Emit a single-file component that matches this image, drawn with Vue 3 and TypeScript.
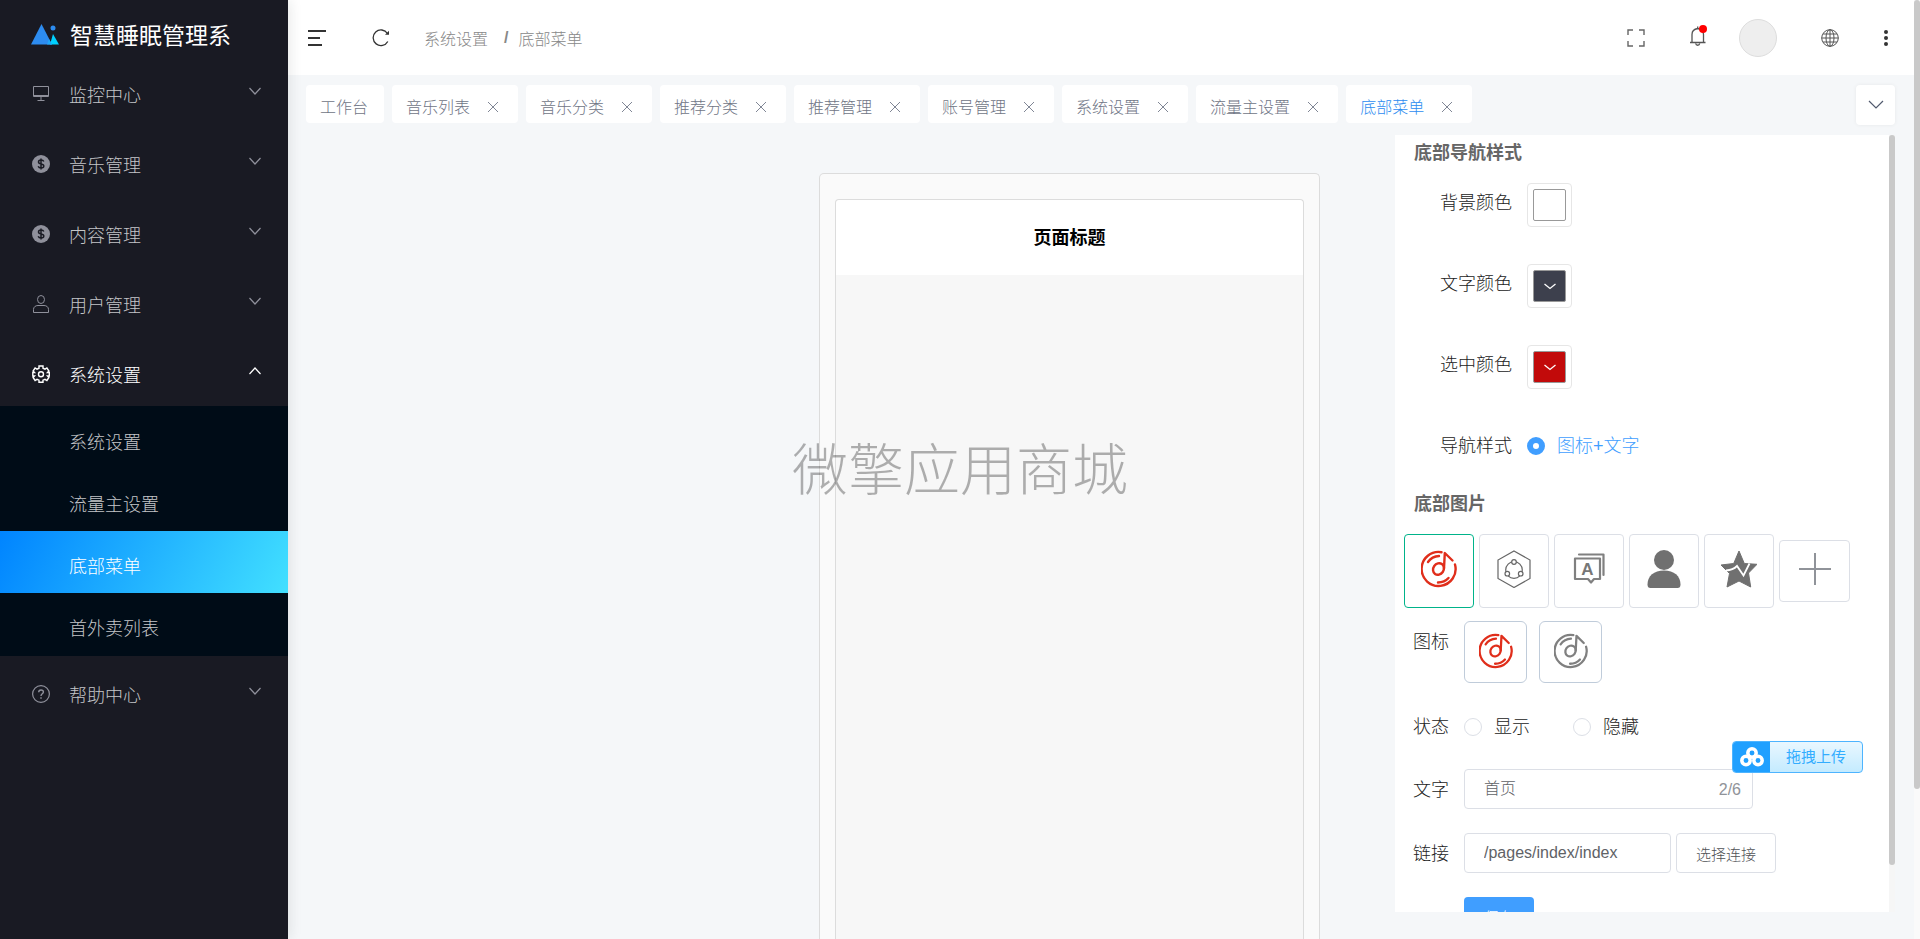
<script setup lang="ts">
import { ref } from 'vue'

interface MenuItem {
  label: string
  icon: 'monitor' | 'coin' | 'user' | 'gear' | 'help'
  children?: string[]
}

const menu: MenuItem[] = [
  { label: '监控中心', icon: 'monitor' },
  { label: '音乐管理', icon: 'coin' },
  { label: '内容管理', icon: 'coin' },
  { label: '用户管理', icon: 'user' },
  { label: '系统设置', icon: 'gear', children: ['系统设置', '流量主设置', '底部菜单', '首外卖列表'] },
  { label: '帮助中心', icon: 'help' },
]

const tabs = ['工作台', '音乐列表', '音乐分类', '推荐分类', '推荐管理', '账号管理', '系统设置', '流量主设置', '底部菜单']
const current = ref('底部菜单')

const colors = [
  { label: '背景颜色', id: 'bg', tone: 'blank' },
  { label: '文字颜色', id: 'text', tone: 'slate' },
  { label: '选中颜色', id: 'active', tone: 'red' },
]

const navStyle = ref('both')
const status = ref('')
const caption = ref('首页')
const link = ref('/pages/index/index')
</script>

<template>
  <div class="app">
    <aside class="sidebar">
      <div class="brand">
        <svg class="brand-logo" viewBox="0 0 28 21" aria-hidden="true">
          <path d="M10.500 0 21 20.500H0Z" fill="#2d8cf0" />
          <path d="M22 10 28 20.500H19Z" fill="#00d1ff" />
          <path d="M18 15l3 5.500h-5z" fill="#1fa8f8" />
          <circle cx="22" cy="4" r="2.500" fill="#2d8cf0" />
        </svg>
        <span>智慧睡眠管理系</span>
      </div>
      <nav>
        <ul class="menu">
          <li v-for="item in menu" :key="item.label">
            <button type="button" class="menu-item" :class="{ open: item.children }">
              <svg class="menu-icon" viewBox="0 0 18 18" fill="none" stroke="currentColor" aria-hidden="true">
                <template v-if="item.icon === 'monitor'">
                  <path d="M1.500 1.500h15v10h-15zM1.500 10.500h15M9 12v3M5.500 15.500h7" />
                </template>
                <template v-else-if="item.icon === 'coin'">
                  <circle cx="9" cy="9" r="9" fill="currentColor" stroke="none" />
                  <path d="M11.800 6.500C11.300 5.300 10.300 5 9 5 7.500 5 6.500 5.700 6.500 6.900c0 2.700 5.300 1.300 5.300 4 0 1.300-1.200 2-2.700 2-1.600 0-2.500-.6-2.900-1.700M9 3.500v11" stroke="#191a23" stroke-width="1.500" />
                </template>
                <template v-else-if="item.icon === 'user'">
                  <ellipse cx="9" cy="4.500" rx="3.500" ry="4" />
                  <path d="M1.500 17.500v-3c0-2.500 2-4 4.500-4h6c2.500 0 4.500 1.500 4.500 4v3z" />
                </template>
                <template v-else-if="item.icon === 'gear'">
                  <path d="M7 1h4v2.200l2 1 1.900-1.200 2 3L15.500 7.500h1.800v3.500h-1.800l1.400 1.500-2 3L13 14.300l-2 .8V17.200H7v-2.100l-2-.8-1.900 1.200-2-3L2.500 11H.8V7.500h1.700L1.100 6l2-3L5 4.200l2-1z" stroke-width="1.400" />
                  <circle cx="9" cy="9.200" r="2.500" stroke-width="1.400" />
                </template>
                <template v-else>
                  <circle cx="9" cy="9" r="8.400" stroke-width="1.200" />
                  <path d="M6.700 7.200C6.700 5.700 7.700 5 9 5s2.400.8 2.400 2.100C11.400 8.800 9 8.900 9 11M9 12.300v1.500" stroke-width="1.400" />
                </template>
              </svg>
              <span class="menu-label">{{ item.label }}</span>
              <svg class="menu-arrow" viewBox="0 0 12 8" fill="none" stroke="currentColor" stroke-width="1.200" aria-hidden="true">
                <path :d="item.children ? 'M.500 7 6 1l5.500 6' : 'M.500 1 6 7l5.500-6'" />
              </svg>
            </button>
            <ul v-if="item.children" class="submenu">
              <li v-for="child in item.children" :key="child">
                <a href="#" :class="{ active: child === current }">{{ child }}</a>
              </li>
            </ul>
          </li>
        </ul>
      </nav>
    </aside>

    <div class="page">
      <header class="topbar">
        <button type="button" class="tool" aria-label="折叠菜单">
          <svg width="20" height="18" viewBox="0 0 20 18" fill="none" stroke="#333" stroke-width="2" aria-hidden="true">
            <path d="M1 2h18M1 9h12M1 16h14" />
          </svg>
        </button>
        <button type="button" class="tool refresh" aria-label="刷新">
          <svg width="18" height="18" viewBox="0 0 18 18" fill="none" stroke="#333" stroke-width="1.300" aria-hidden="true">
            <path d="M15.800 12.500A7.800 7.800 0 1 1 15.500 4.500" />
            <path d="M17 1.800v4h-4z" fill="#333" stroke="none" />
          </svg>
        </button>
        <nav class="crumbs" aria-label="面包屑">
          <a href="#">系统设置</a><b>/</b><span>底部菜单</span>
        </nav>
        <div class="tools">
          <button type="button" class="tool" aria-label="全屏">
            <svg width="18" height="18" viewBox="0 0 18 18" fill="none" stroke="#666" stroke-width="1.400" aria-hidden="true">
              <path d="M1 6V1h5M12 1h5v5M17 12v5h-5M6 17H1v-5" />
            </svg>
          </button>
          <button type="button" class="tool bell" aria-label="通知">
            <svg width="18" height="22" viewBox="0 0 18 22" fill="none" stroke="#555" stroke-width="1.300" aria-hidden="true">
              <path d="M1 17.500h15.500M3 17V9.500C3 6 5.500 4 8.700 3.500 12 4 14.500 6 14.500 9.500V17M8.700 3.500V1.500M6.700 18.500c.3 2.300 3.700 2.300 4 0" />
              <circle cx="14" cy="4" r="4" fill="#f00" stroke="none" />
            </svg>
          </button>
          <button type="button" class="avatar" aria-label="账号"></button>
          <button type="button" class="tool globe" aria-label="语言">
            <svg width="18" height="18" viewBox="0 0 18 18" fill="none" stroke="#555" aria-hidden="true">
              <circle cx="9" cy="9" r="8.300" />
              <ellipse cx="9" cy="9" rx="4" ry="8.300" />
              <path d="M9 .7v16.600M.7 9h16.600M2 5h14M2 13h14" />
            </svg>
          </button>
          <button type="button" class="tool" aria-label="更多">
            <svg width="6" height="18" viewBox="0 0 6 18" fill="#333" aria-hidden="true">
              <circle cx="3" cy="3" r="2" /><circle cx="3" cy="9" r="2" /><circle cx="3" cy="15" r="2" />
            </svg>
          </button>
        </div>
      </header>

      <div class="tabbar">
        <div v-for="(tab, i) in tabs" :key="tab" class="tab" :class="{ current: tab === current }">
          <a href="#">{{ tab }}</a>
          <button v-if="i > 0" type="button" :aria-label="'关闭' + tab">
            <svg width="12" height="12" viewBox="0 0 12 12" stroke="#808695" aria-hidden="true"><path d="M1 1l10 10M11 1 1 11" /></svg>
          </button>
        </div>
        <button type="button" class="tab-more" aria-label="更多标签">
          <svg width="16" height="10" viewBox="0 0 16 10" fill="none" stroke="#515a6e" stroke-width="1.200" aria-hidden="true"><path d="M1 1l7 7 7-7" /></svg>
        </button>
      </div>

      <main class="content">
        <section class="stage">
          <div class="phone">
            <div class="screen">
              <h1>页面标题</h1>
            </div>
          </div>
        </section>

        <section class="panel">
          <div class="panel-body">
            <h2>底部导航样式</h2>
            <div class="style-form">
              <div v-for="c in colors" :key="c.id" class="row">
                <label :for="'color-' + c.id">{{ c.label }}</label>
                <button :id="'color-' + c.id" type="button" class="swatch">
                  <span :class="c.tone">
                    <svg v-if="c.tone !== 'blank'" width="12" height="7" viewBox="0 0 12 7" fill="none" stroke="#fff" stroke-width="1.300" aria-hidden="true"><path d="M.500 1 6 5.500 11.500 1" /></svg>
                  </span>
                </button>
              </div>
              <div class="row middle">
                <span class="label">导航样式</span>
                <label class="choice" :class="{ on: navStyle === 'both' }">
                  <input v-model="navStyle" type="radio" name="nav-style" value="both" />图标+文字
                </label>
              </div>
            </div>

            <h2 class="second">底部图片</h2>
            <div class="tiles">
              <button type="button" class="tile selected" aria-label="音乐">
                <svg width="36" height="38" viewBox="0 0 36 38" fill="none" stroke="#e02e1b" stroke-width="2.400" stroke-linecap="round" aria-hidden="true">
                  <path d="M20.500 2.200A17 17 0 1 0 34 14.500" />
                  <path d="M31.500 10.500 23.800 3 23 18.500" stroke-linejoin="round" />
                  <ellipse cx="17.500" cy="19" rx="5.200" ry="6" transform="rotate(35 17.500 19)" />
                  <path d="M7 12c2.500-3.500 6-5.700 11-6M17 32.500c4 0 7.800-1.500 10.500-4.500" />
                </svg>
              </button>
              <button type="button" class="tile" aria-label="关系">
                <svg width="36" height="38" viewBox="0 0 36 38" fill="none" stroke="#666" stroke-width="1.200" aria-hidden="true">
                  <path d="M18 1 34 10v18.500L18 37.500 2 28.500V10z" />
                  <circle cx="18" cy="20" r="8.300" />
                  <g fill="#fff"><circle cx="18" cy="12" r="2.300" /><circle cx="11.300" cy="23.700" r="2.300" /><circle cx="24.700" cy="23.700" r="2.300" /></g>
                </svg>
              </button>
              <button type="button" class="tile" aria-label="文章">
                <svg width="36" height="38" viewBox="0 0 36 38" fill="none" stroke="#808080" stroke-width="2.200" stroke-linejoin="round" stroke-linecap="round" aria-hidden="true">
                  <path d="M4 8.500h25V29h-6l-3 3.500-3-3.500H4zM8 4.500h24.500V25" />
                  <text x="16.500" y="25" text-anchor="middle" font-family="Liberation Sans, sans-serif" font-size="17" font-weight="700" fill="#777" stroke="none">A</text>
                </svg>
              </button>
              <button type="button" class="tile" aria-label="我的">
                <svg width="36" height="38" viewBox="0 0 36 38" fill="#707070" aria-hidden="true">
                  <circle cx="18" cy="10" r="10" />
                  <path d="M1.500 34.500C1.500 26 8 20.500 18 20.500s16.500 5.500 16.500 14c0 2.500-1 3.500-3 3.500h-27c-2 0-3-1-3-3.500z" />
                </svg>
              </button>
              <button type="button" class="tile" aria-label="收藏">
                <svg width="36" height="38" viewBox="0 0 36 38" aria-hidden="true">
                  <path d="M18 1l5.300 12.500L36 14.300l-8.500 8.700 2.200 14L18 31 6 37l2.500-13.500L0 15l12.700-1.500z" fill="#707070" stroke="#707070" stroke-linejoin="round" />
                  <path d="M5 20.500c4-.3 8-1.500 11-4.500l6.500 9.500 6-12" fill="none" stroke="#fff" stroke-width="1.800" />
                </svg>
              </button>
              <button type="button" class="tile add" aria-label="添加">
                <svg width="32" height="32" viewBox="0 0 32 32" stroke="#909399" stroke-width="2" aria-hidden="true"><path d="M16 0v32M0 16h32" /></svg>
              </button>
            </div>

            <form class="item-form" @submit.prevent>
              <div class="row">
                <span class="label">图标</span>
                <div class="icon-pair">
                  <button v-for="tone in ['#e02e1b', '#808080']" :key="tone" type="button" class="icon-box" aria-label="更换图标">
                    <svg width="34" height="36" viewBox="0 0 36 38" fill="none" :stroke="tone" stroke-width="2.400" stroke-linecap="round" aria-hidden="true">
                      <path d="M20.500 2.200A17 17 0 1 0 34 14.500" />
                      <path d="M31.500 10.500 23.800 3 23 18.500" stroke-linejoin="round" />
                      <ellipse cx="17.500" cy="19" rx="5.200" ry="6" transform="rotate(35 17.500 19)" />
                      <path d="M7 12c2.500-3.500 6-5.700 11-6M17 32.500c4 0 7.800-1.500 10.500-4.500" />
                    </svg>
                  </button>
                </div>
              </div>
              <div class="row status">
                <span class="label">状态</span>
                <label class="choice"><input v-model="status" type="radio" name="status" value="show" />显示</label>
                <label class="choice"><input v-model="status" type="radio" name="status" value="hide" />隐藏</label>
              </div>
              <div class="row">
                <label for="caption">文字</label>
                <div class="field wide">
                  <input id="caption" v-model="caption" type="text" maxlength="6" />
                  <span class="count">{{ caption.length }}/6</span>
                </div>
              </div>
              <div class="row">
                <label for="link">链接</label>
                <div class="field">
                  <input id="link" v-model="link" type="text" />
                </div>
                <button type="button" class="pick">选择连接</button>
              </div>
              <div class="row save-row">
                <button type="submit" class="save">保存</button>
              </div>
            </form>
          </div>
          <div class="panel-track"><div class="panel-thumb"></div></div>
        </section>
      </main>
    </div>

    <div class="page-track"><div class="page-thumb"></div></div>
    <div class="watermark">微擎应用商城</div>
    <button type="button" class="uploader">
      <span class="uploader-mark">
        <svg width="24" height="20" viewBox="0 0 24 20" fill="none" stroke="#fff" stroke-width="3.500" aria-hidden="true">
          <circle cx="12" cy="6" r="4.200" /><circle cx="6" cy="13.500" r="4.200" /><circle cx="18" cy="13.500" r="4.200" />
        </svg>
      </span>
      <span class="uploader-text">拖拽上传</span>
    </button>
  </div>
</template>

<style>
body {
  margin: 0;
  background: #f5f7f9;
}
</style>

<style scoped>
* {
  box-sizing: border-box;
}
.app {
  position: relative;
  display: flex;
  height: 100vh;
  overflow: hidden;
  background: #f5f7f9;
  color: #222;
  font-family: "Liberation Sans", "Noto Sans CJK SC", sans-serif;
  font-size: 18px;
  font-weight: 300;
}
button,
input {
  font: inherit;
  color: inherit;
}
button {
  padding: 0;
  border: 0;
  background: none;
  cursor: pointer;
}
svg {
  display: block;
}
a {
  color: inherit;
  text-decoration: none;
}
ul {
  margin: 0;
  padding: 0;
  list-style: none;
}

.sidebar {
  position: relative;
  z-index: 2;
  flex: 0 0 288px;
  background: #191a23;
  box-shadow: 2px 0 12px rgba(29, 35, 41, 0.1);
}
.brand {
  display: flex;
  align-items: center;
  gap: 11px;
  height: 60px;
  padding: 8px 0 0 31px;
  color: #fff;
  font-size: 23px;
  font-weight: 400;
}
.brand-logo {
  width: 28px;
  height: 21px;
}
.menu {
  display: grid;
  gap: 4px;
}
.menu-item {
  display: flex;
  align-items: center;
  gap: 19px;
  width: 100%;
  height: 66px;
  padding: 1px 27px 0 32px;
  color: #8f909b;
  text-align: left;
}
.menu-icon {
  width: 18px;
  height: 18px;
}
.menu-label {
  flex: 1;
  color: #c4c5c8;
}
.menu-arrow {
  width: 12px;
  height: 8px;
  margin-bottom: 6px;
}
.menu-item.open,
.menu-item.open .menu-label {
  color: #fff;
}
.submenu {
  padding: 1px 0;
  background: #000c17;
}
.submenu a {
  display: flex;
  align-items: center;
  height: 62px;
  padding: 6px 0 0 69px;
  color: #c4c5c8;
}
.submenu a.active {
  background: linear-gradient(118deg, #0084ff, #42e0ff);
  color: #fff;
}

.page {
  display: flex;
  flex: 1;
  flex-direction: column;
  min-width: 0;
  padding-right: 6px;
}
.topbar {
  display: flex;
  flex: 0 0 75px;
  align-items: center;
  padding: 0 25px 0 19px;
  background: #fff;
}
.refresh {
  margin-left: 45px;
}
.crumbs {
  display: flex;
  align-items: center;
  gap: 14px;
  margin-left: 34px;
  color: #888;
  font-size: 16px;
}
.crumbs b {
  margin-right: -4px;
  margin-left: 2px;
  font-weight: 700;
}
.tools {
  display: flex;
  align-items: center;
  gap: 44px;
  margin-left: auto;
}
.bell {
  margin-bottom: 3px;
}
.avatar {
  width: 38px;
  height: 38px;
  margin-left: -12px;
  border: 1px solid #ddd;
  border-radius: 50%;
  background: #eee;
}

.tabbar {
  display: flex;
  flex: 0 0 60px;
  align-items: flex-start;
  gap: 8px;
  padding: 10px 19px 0 18px;
}
.tab {
  display: flex;
  align-items: center;
  gap: 14px;
  height: 38px;
  padding: 0 16px 0 14px;
  border-radius: 4px;
  background: #fff;
  color: #6f7585;
  font-size: 16px;
  white-space: nowrap;
}
.tab a {
  padding-top: 8px;
  line-height: 30px;
}
.tab button {
  display: flex;
  justify-content: center;
  width: 18px;
  padding-top: 6px;
}
.tab.current {
  color: #2d8cf0;
}
.tab-more {
  display: grid;
  place-items: center;
  width: 39px;
  height: 40px;
  margin-left: auto;
  border-radius: 4px;
  background: #fff;
  box-shadow: 0 0 4px rgba(0, 0, 0, 0.06);
}

.content {
  display: flex;
  flex: 1;
  min-height: 0;
  padding-right: 19px;
}
.stage {
  display: flex;
  flex: 1;
  justify-content: flex-end;
  padding: 38px 75px 0 0;
}
.phone {
  width: 501px;
  padding: 25px 15px 0;
  border: 1px solid #dcdcdc;
  border-bottom: 0;
  border-radius: 5px 5px 0 0;
  background: #fafafa;
}
.screen {
  height: 100%;
  border: 1px solid #dcdcdc;
  border-bottom: 0;
  border-radius: 4px 4px 0 0;
  background: #f7f7f7;
}
.screen h1 {
  margin: 0;
  padding-top: 1px;
  border-radius: 4px 4px 0 0;
  background: #fff;
  color: #000;
  font-size: 18px;
  font-weight: 700;
  line-height: 74px;
  text-align: center;
}

.panel {
  display: flex;
  flex: 0 0 500px;
  margin-bottom: 27px;
  overflow: hidden;
  background: #fff;
}
.panel-body {
  flex: 1;
  overflow: hidden;
}
.panel-track {
  flex: 0 0 6px;
  background: #f6f6f6;
}
.panel-thumb {
  height: 94%;
  border-radius: 3px;
  background: #c9c9c9;
}
h2 {
  margin: 0;
  padding-left: 19px;
  color: #666;
  font-size: 18px;
  font-weight: 700;
  line-height: 37px;
}
h2.second {
  margin-top: 20px;
}
.row {
  display: flex;
  align-items: flex-start;
  gap: 15px;
  line-height: 40px;
}
.style-form {
  display: grid;
  gap: 37px;
  padding: 11px 0 0 45px;
}
.swatch {
  width: 45px;
  height: 44px;
  padding: 5px;
  border: 1px solid #e6e6e6;
  border-radius: 4px;
}
.swatch span {
  display: grid;
  place-items: center;
  width: 33px;
  height: 32px;
  border: 1px solid #999;
  border-radius: 2px;
}
.swatch .blank {
  background: #fff;
}
.swatch .slate {
  background: #3d404d;
}
.swatch .red {
  background: #c20a0a;
}
.choice {
  display: flex;
  align-items: center;
  gap: 12px;
}
.choice.on {
  color: #409eff;
}
.choice input {
  width: 18px;
  height: 18px;
  margin: 0;
  border: 1px solid #dcdfe6;
  border-radius: 50%;
  background: #fff;
  appearance: none;
}
.choice input:checked {
  border: 6px solid #409eff;
}

.tiles {
  display: flex;
  align-items: center;
  gap: 5px;
  margin-top: 11px;
  padding-left: 9px;
}
.tile {
  display: flex;
  justify-content: center;
  width: 70px;
  height: 74px;
  padding-top: 15px;
  border: 1px solid #dcdfe6;
  border-radius: 4px;
}
.tile.selected {
  border-color: #00b38a;
}
.tile.add {
  width: 71px;
  height: 62px;
  padding-top: 12px;
}

.item-form {
  display: grid;
  gap: 24px;
  margin-top: 13px;
  padding-left: 18px;
}
.item-form .row {
  line-height: 42px;
}
.icon-pair {
  display: flex;
  gap: 12px;
}
.icon-box {
  display: grid;
  place-items: center;
  width: 63px;
  height: 62px;
  padding-bottom: 2px;
  border: 1px solid #c0ccda;
  border-radius: 6px;
}
.item-form .status {
  height: 38px;
  line-height: 40px;
}
.status .choice + .choice {
  margin-left: 28px;
}
.field {
  position: relative;
  width: 207px;
  height: 40px;
}
.item-form .row label {
  height: 40px;
}
.field.wide {
  width: 289px;
}
.field input {
  display: block;
  width: 100%;
  height: 40px;
  padding: 0 19px;
  border: 1px solid #dcdfe6;
  border-radius: 4px;
  background: #fff;
  color: #606266;
  font-size: 16px;
}
.count {
  position: absolute;
  top: 0;
  right: 12px;
  color: #909399;
  font-size: 16px;
}
.pick {
  width: 100px;
  height: 40px;
  margin-left: -10px;
  border: 1px solid #dcdfe6;
  border-radius: 4px;
  color: #505256;
  font-size: 15px;
}
.save-row {
  padding-left: 51px;
}
.save {
  height: 40px;
  padding: 0 20px;
  border-radius: 4px;
  background: #409eff;
  color: #fff;
  font-size: 15px;
}

.page-track {
  position: absolute;
  inset: 0 0 0 auto;
  width: 6px;
  background: #fafafa;
}
.page-thumb {
  height: 84%;
  border-radius: 3px;
  background: #c9c9c9;
}
.watermark {
  position: absolute;
  inset: 0;
  z-index: 3;
  display: grid;
  place-items: center;
  padding-bottom: 8px;
  color: rgba(0, 0, 0, 0.3);
  font-size: 56px;
  pointer-events: none;
}
.uploader {
  position: absolute;
  right: 57px;
  bottom: 166px;
  z-index: 4;
  display: flex;
  width: 131px;
  height: 32px;
  overflow: hidden;
  border: 1px solid #4db4ff;
  border-radius: 4px;
  background: linear-gradient(#e9f7ff, #c4ebff);
  color: #33adff;
  font-size: 15px;
  font-weight: 400;
  line-height: 30px;
}
.uploader-mark {
  display: grid;
  place-items: center;
  width: 37px;
  height: 30px;
  background: #20a0ff;
}
.uploader-text {
  flex: 1;
}
</style>
